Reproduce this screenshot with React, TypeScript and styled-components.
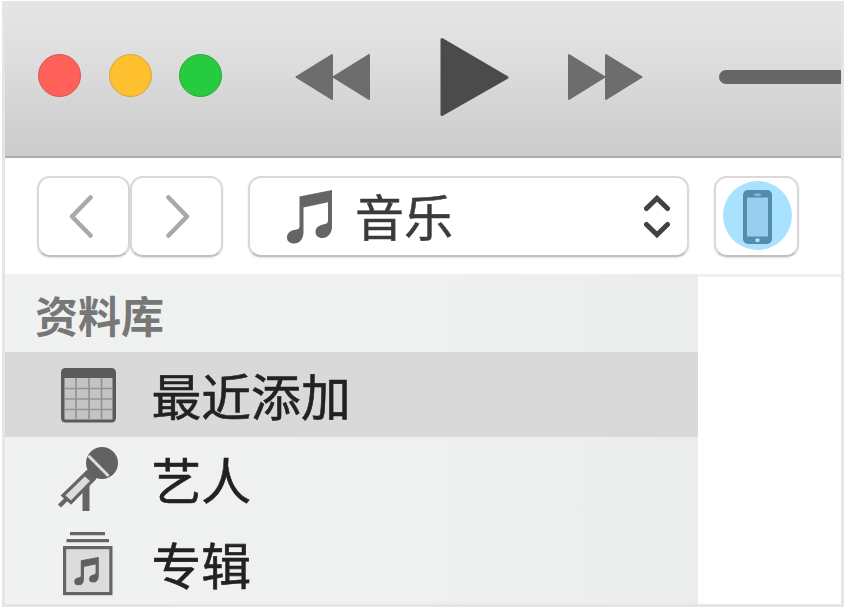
import React from "react";
import styled, { createGlobalStyle } from "styled-components";

const GlobalStyle = createGlobalStyle`
  * { box-sizing: border-box; }
  html, body { margin: 0; background: #fff; }
  body { overflow: hidden; font-family: "Noto Sans CJK SC", "Noto Sans", sans-serif; }
  svg { display: block; flex: none; }
`;

const Page = styled.div`
  width: 846px;
  height: 609px;
  padding: 1px 2px 2px;
`;

const Window = styled.main`
  width: 842px;
  height: 606px;
  border: 3px solid #e5e5e5;
  border-top-width: 1px;
  display: flex;
  flex-direction: column;
  overflow: hidden;
  background: #fff;
`;

const Toolbar = styled.header`
  flex: none;
  height: 156px;
  display: flex;
  align-items: center;
  padding: 0 0 4px 33px;
  background: linear-gradient(#e5e5e5, #dedede 35%, #cbcbcb);
  border-bottom: 2px solid #adadad;
`;

const Lights = styled.div`
  display: flex;
  gap: 27.5px;
  margin-right: 73px;
  padding-bottom: 4px;
`;

const Light = styled.span<{ $fill: string; $edge: string }>`
  width: 43px;
  height: 43px;
  border-radius: 50%;
  background: ${(p) => p.$fill};
  border: 1.5px solid ${(p) => p.$edge};
`;

const Transport = styled.div`
  display: flex;
  align-items: center;
  width: 424px;
`;

const PlaySlot = styled.span`
  margin: 0 57.5px 0 69px;
`;

const Volume = styled.span`
  flex: 1;
  height: 14px;
  border-radius: 7px 0 0 7px;
  background: #666;
`;

const NavBar = styled.nav`
  flex: none;
  height: 116px;
  display: flex;
  align-items: flex-start;
  padding: 18px 0 0 31.6px;
`;

const Button = styled.button<{ $width: number; $gap?: number }>`
  flex: none;
  width: ${(p) => p.$width}px;
  height: 81px;
  margin: 0 ${(p) => p.$gap ?? 0}px 0 0;
  padding: 0;
  display: flex;
  align-items: center;
  justify-content: center;
  background: #fff;
  border: 2px solid #d9d9d9;
  border-bottom: 2px solid #c0c0c0;
  border-radius: 13px;
  box-shadow: 0 1px 2px rgba(0, 0, 0, 0.12);
`;

const BackButton = styled(Button)`
  padding-right: 4px;
`;

const ForwardButton = styled(Button)`
  padding-left: 3px;
`;

const Select = styled(Button)`
  justify-content: flex-start;
  padding: 0 17px 0 37px;
  font: 400 49px/72px "Noto Sans CJK SC", sans-serif;
  color: #3b3b3b;
  -webkit-text-stroke: 0.5px #3b3b3b;
`;

const SelectText = styled.span`
  flex: 1;
  text-align: left;
  margin-left: 23px;
  padding-bottom: 3px;
`;

const Highlight = styled.span`
  width: 69px;
  height: 69px;
  margin: 0 0 3px 2px;
  border-radius: 50%;
  display: flex;
  align-items: center;
  justify-content: center;
  padding-top: 3px;
  background: #a8e2ff;
`;

const Body = styled.div`
  flex: 1;
  display: flex;
  min-height: 0;
`;

const Sidebar = styled.aside`
  width: 693px;
  background: linear-gradient(90deg, #f0f2f2, #eff0f0 60%, #ebeded);
`;

const Content = styled.section`
  flex: 1;
  border-top: 3px solid #f0f0f0;
`;

const Heading = styled.h2`
  margin: 0;
  height: 78px;
  padding: 0 0 0 30px;
  font-size: 43px;
  font-weight: 700;
  line-height: 81px;
  color: #777;
`;

const Row = styled.div<{ $selected?: boolean }>`
  height: 85px;
  display: flex;
  align-items: center;
  padding: 0 0 ${(p) => (p.$selected ? 0 : 2)}px 52px;
  background: ${(p) => (p.$selected ? "#d9d9d9" : "transparent")};
`;

const RowLabel = styled.span`
  margin-left: 30.5px;
  padding-bottom: 1px;
  font-size: 49.8px;
  line-height: 80px;
  color: #222;
  -webkit-text-stroke: 0.6px #222;
`;

const SkipIcon = ({ forward }: { forward?: boolean }) => (
  <svg width="76" height="48" viewBox="0 0 76 48">
    <g transform={forward ? "translate(76 0) scale(-1 1)" : undefined} fill="#6d6d6d" stroke="#6d6d6d" strokeWidth="2" strokeLinejoin="round">
      <path d="M1.5 24 37 2V46ZM38.5 24 74 2V46Z" />
    </g>
  </svg>
);

const PlayIcon = () => (
  <svg width="69" height="80" viewBox="0 0 69 80">
    <path d="M2 2.5 67 40.5 2 77.5Z" fill="#4b4b4b" stroke="#4b4b4b" strokeWidth="3" strokeLinejoin="round" />
  </svg>
);

const Chevron = ({ right }: { right?: boolean }) => (
  <svg width="24" height="43" viewBox="0 0 24 43">
    <path d={right ? "M2.5 2.5 21 21.5 2.5 40.5" : "M21.5 2.5 3 21.5 21.5 40.5"} fill="none" stroke="#a9a9a9" strokeWidth="4.6" strokeLinecap="round" strokeLinejoin="round" />
  </svg>
);

const notePath =
  "M12.5 6.5 45 0V37C45 43 41 48 35.5 48C31 48 28.5 45.5 28.5 42C28.5 37.5 32 35 37 34.2C40 33.7 41 33 41 30V12.3L16.5 17.5V42C16.5 49 12.5 53.5 7 53.5C2.5 53.5 0 51 0 47.5C0 43 3.5 40.5 8.5 39.8C11.5 39.3 12.5 38.5 12.5 36Z";

const NoteIcon = () => (
  <svg width="45" height="54" viewBox="0 0 45 54">
    <path d={notePath} fill="#656565" />
  </svg>
);

const UpDownIcon = () => (
  <svg width="26" height="43" viewBox="0 0 26 43">
    <path d="M2.5 13.5 13 3.3 23.5 13.5M2.5 29.5 13 39.7 23.5 29.5" fill="none" stroke="#424242" strokeWidth="5" strokeLinecap="round" />
  </svg>
);

const PhoneIcon = () => (
  <svg width="29" height="54" viewBox="0 0 29 54">
    <rect width="29" height="54" rx="5" fill="#538cac" />
    <rect x="4" y="7.5" width="21" height="39" fill="#98cfee" />
    <rect x="11" y="3.5" width="7" height="2.5" rx="1.2" fill="#80bad7" />
    <rect x="12.5" y="48.5" width="4" height="3.5" rx="0.8" fill="#b2e3fa" />
  </svg>
);

const CalendarIcon = () => (
  <svg width="64" height="66" viewBox="0 0 64 66">
    <rect x="4" y="6" width="55" height="54.5" rx="4.5" fill="#5b5b5b" />
    <rect x="7.5" y="16" width="48" height="41.5" fill="#c4c4c4" />
    <path d="M19 16V57.5M32 16V57.5M44.5 16V57.5M7.5 26.5H55.5M7.5 37H55.5M7.5 47.5H55.5" stroke="#949494" strokeWidth="1.7" />
  </svg>
);

const MicrophoneIcon = () => (
  <svg width="64" height="66" viewBox="0 0 64 66">
    <path d="M25.5 42 32.5 35V65H25.5Z" fill="#656565" />
    <path d="M30 26 37 33 14 56.5 6 49.5Z" fill="#ddd" stroke="#656565" strokeWidth="3.2" />
    <path d="M28.5 26.5 37.5 34.5" stroke="#656565" strokeWidth="7" />
    <path d="M9.5 53 2.5 60" stroke="#656565" strokeWidth="4.5" />
    <circle cx="45" cy="17" r="16" fill="#626262" />
    <path d="M31.5 9.8 51.5 30" stroke="#dedfdf" strokeWidth="3" />
  </svg>
);

const AlbumIcon = () => (
  <svg width="64" height="66" viewBox="0 0 64 66">
    <path d="M13 2.7H48M9.5 9.7H52" stroke="#656565" strokeWidth="3.2" />
    <rect x="7.6" y="16.6" width="46.3" height="46" fill="#dcdcdc" stroke="#656565" strokeWidth="3.2" />
    <g transform="translate(17.8 26.5) scale(.52 .51)">
      <path d={notePath} fill="#606060" stroke="#606060" strokeWidth="2" />
    </g>
  </svg>
);

const libraryItems = [
  { label: "最近添加", icon: <CalendarIcon />, selected: true },
  { label: "艺人", icon: <MicrophoneIcon />, selected: false },
  { label: "专辑", icon: <AlbumIcon />, selected: false },
];

export default function App() {
  return (
    <Page>
      <GlobalStyle />
      <Window>
        <Toolbar>
          <Lights>
            <Light $fill="#ff6059" $edge="#da5550" />
            <Light $fill="#ffc02f" $edge="#d9a33c" />
            <Light $fill="#27cb40" $edge="#26a83a" />
          </Lights>
          <Transport>
            <SkipIcon />
            <PlaySlot><PlayIcon /></PlaySlot>
            <SkipIcon forward />
          </Transport>
          <Volume />
        </Toolbar>
        <NavBar>
          <BackButton $width={93} aria-label="后退"><Chevron /></BackButton>
          <ForwardButton $width={93.5} $gap={25} aria-label="前进"><Chevron right /></ForwardButton>
          <Select $width={441} $gap={25}>
            <NoteIcon />
            <SelectText>音乐</SelectText>
            <UpDownIcon />
          </Select>
          <Button $width={85} aria-label="设备">
            <Highlight><PhoneIcon /></Highlight>
          </Button>
        </NavBar>
        <Body>
          <Sidebar>
            <Heading>资料库</Heading>
            {libraryItems.map((item) => (
              <Row key={item.label} $selected={item.selected}>
                {item.icon}
                <RowLabel>{item.label}</RowLabel>
              </Row>
            ))}
          </Sidebar>
          <Content />
        </Body>
      </Window>
    </Page>
  );
}
